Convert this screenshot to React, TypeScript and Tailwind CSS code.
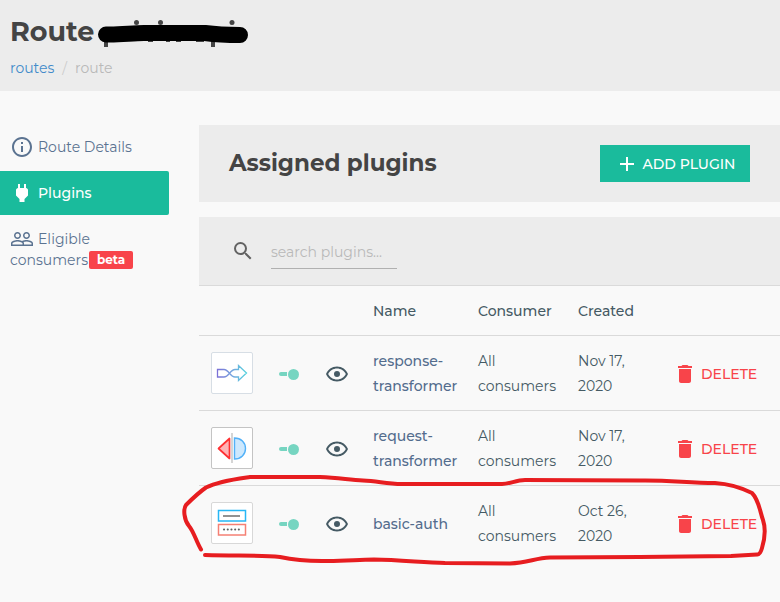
import type { ReactNode } from 'react';
import { MdAdd, MdDelete, MdInfoOutline, MdPeopleOutline, MdSearch } from 'react-icons/md';

function PlugIcon() {
  return (
    <svg viewBox="0 0 24 24" className="size-6 shrink-0" fill="currentColor" aria-hidden="true">
      <path d="M16 7V3h-2v4h-4V3H8v4C7 7 6 8 6 9v5.500L9.500 18v3h5v-3l3.500-3.500V9c0-1-1-2-2-2z" />
    </svg>
  );
}

function EyeIcon() {
  return (
    <svg viewBox="0 0 24 24" className="size-6" fill="currentColor" aria-hidden="true">
      <path d="M12,9A3,3 0 0,1 15,12A3,3 0 0,1 12,15A3,3 0 0,1 9,12A3,3 0 0,1 12,9M12,4.5C17,4.5 21.27,7.61 23,12C21.27,16.39 17,19.5 12,19.5C7,19.5 2.73,16.39 1,12C2.73,7.61 7,4.5 12,4.5M3.18,12C4.83,15.36 8.24,17.5 12,17.5C15.76,17.5 19.17,15.36 20.82,12C19.17,8.64 15.76,6.5 12,6.5C8.24,6.5 4.83,8.64 3.18,12Z" />
    </svg>
  );
}

function ResponseIcon() {
  return (
    <svg viewBox="0 0 40 40" className="size-10" fill="none" aria-hidden="true">
      <defs>
        <linearGradient id="flow" gradientUnits="userSpaceOnUse" x1="5" y1="20" x2="35" y2="20">
          <stop offset="0" stopColor="#7b6fd6" />
          <stop offset="0.5" stopColor="#78a5df" />
          <stop offset="1" stopColor="#52d3dd" />
        </linearGradient>
      </defs>
      <path
        d="M5.500 16.500H12C17 16.500 18 24 23 24H26.500V27.500L34.500 20L26.500 12.500V16.500H23C18 16.500 17 24 12 24H5.500Z"
        stroke="url(#flow)"
        strokeWidth="1.300"
      />
    </svg>
  );
}

function RequestIcon() {
  return (
    <svg viewBox="0 0 40 40" className="size-10" aria-hidden="true">
      <path d="M17.500 10.500V30.500L6.500 20.500Z" fill="#ffb3b5" stroke="#ff3033" strokeWidth="1.700" strokeLinejoin="round" />
      <path d="M20 5V35" stroke="#d5d5d5" strokeWidth="2" />
      <path d="M22.500 10C29 10 33.500 14.500 33.500 20.500C33.500 26.500 29 31 22.500 31Z" fill="#cde8fd" stroke="#52b1f8" strokeWidth="1.400" />
    </svg>
  );
}

function AuthIcon() {
  return (
    <svg viewBox="0 0 40 40" className="size-10" fill="none" aria-hidden="true">
      <rect x="6.500" y="7.500" width="27" height="10.500" stroke="#27b7f5" strokeWidth="1.500" />
      <path d="M11 13H28" stroke="#929292" strokeWidth="2" />
      <rect x="6.500" y="21.500" width="27" height="10.500" stroke="#f58074" strokeWidth="1.500" />
      <path d="M12 26.500H28" stroke="#5f5f5f" strokeWidth="2" strokeLinecap="round" strokeDasharray="0.1 3.6" />
    </svg>
  );
}

type Plugin = { name: string; created: string; icon: ReactNode; frame: string };

const plugins: Plugin[] = [
  { name: 'response-transformer', created: 'Nov 17, 2020', icon: <ResponseIcon />, frame: 'border-[#d7dee5]' },
  { name: 'request-transformer', created: 'Nov 17, 2020', icon: <RequestIcon />, frame: 'border-[#c4c4c4]' },
  { name: 'basic-auth', created: 'Oct 26, 2020', icon: <AuthIcon />, frame: 'border-[#d8d8d8]' },
];

function Toggle({ name }: { name: string }) {
  return (
    <label className="relative flex h-6 w-6 items-center">
      <input type="checkbox" defaultChecked aria-label={`Enable ${name}`} className="absolute inset-0 m-0 size-full cursor-pointer opacity-0" />
      <span className="h-1 w-2 rounded-l-full bg-[#76d5c1]" />
      <span className="ml-px size-[11px] rounded-full bg-[#76d5c1]" />
    </label>
  );
}

function PluginRow({ plugin }: { plugin: Plugin }) {
  return (
    <tr className="h-[75px] border-t border-[#dadada] [&>td]:pt-0.5">
      <td className="pl-3">
        <div className={`-mt-0.5 flex size-[42px] items-center justify-center overflow-hidden rounded-xs border bg-white ${plugin.frame}`}>
          {plugin.icon}
        </div>
      </td>
      <td><Toggle name={plugin.name} /></td>
      <td>
        <button type="button" aria-label={`View ${plugin.name}`} className="block"><EyeIcon /></button>
      </td>
      <td className="pr-4"><a href="#plugin" className="font-medium text-[#536c8d]">{plugin.name}</a></td>
      <td className="pr-4">All consumers</td>
      <td className="pr-10">{plugin.created}</td>
      <td>
        <button type="button" className="flex items-center gap-1 font-medium text-[#f8444a]">
          <MdDelete className="size-6" />
          DELETE
        </button>
      </td>
    </tr>
  );
}

export default function App() {
  return (
    <div className="relative min-h-screen overflow-hidden bg-[#f9f9f9] font-['Montserrat','Inter',sans-serif] text-sm text-[#455a64]">
      <header className="h-[91px] bg-[#ececec] px-2.5 pt-4">
        <h1 className="text-[27px] leading-8 font-bold text-[#444]">Route</h1>
        <nav aria-label="Breadcrumb" className="mt-2.5 flex gap-2 leading-5 text-[#b9b9b9]">
          <a href="#routes" className="text-[#428bca]">routes</a>
          <span className="text-[#ccc]">/</span>
          <span>route</span>
        </nav>
      </header>

      <div className="flex pt-[34px]">
        <aside className="w-[169px] shrink-0 text-[#5b7391]">
          <a href="#details" className="flex h-[46px] items-center gap-1 pb-0.5 pl-2.5">
            <MdInfoOutline className="size-6 shrink-0" />
            Route Details
          </a>
          <a href="#plugins" className="flex h-11 items-center gap-1 rounded-r-xs bg-[#1abb9c] pl-2.5 font-medium text-white">
            <PlugIcon />
            Plugins
          </a>
          <a href="#consumers" className="block pt-[13px] pl-2.5 leading-5">
            <span className="flex h-[22px] items-center gap-1">
              <MdPeopleOutline className="size-6 shrink-0" />
              Eligible
            </span>
            <span className="flex items-center gap-px">
              consumers
              <span className="rounded-xs bg-[#f8444a] px-2 text-xs leading-[18px] font-bold text-white">beta</span>
            </span>
          </a>
        </aside>

        <main className="ml-[30px] min-w-0 flex-1">
          <section className="flex h-[77px] items-center justify-between bg-[#ececec] px-[30px]">
            <h2 className="pb-0.5 text-[23px] leading-8 font-bold text-[#444]">Assigned plugins</h2>
            <button type="button" className="flex h-[37px] w-[150px] items-center justify-center gap-1 bg-[#1abb9c] font-medium text-white">
              <MdAdd className="size-6" />
              ADD PLUGIN
            </button>
          </section>

          <section className="mt-[15px]">
            <div className="flex h-[68px] items-center gap-4 bg-[#ececec] pl-8">
              <label htmlFor="plugin-search" aria-label="Search plugins">
                <MdSearch className="size-6 text-[#626262]" />
              </label>
              <input
                id="plugin-search"
                type="text"
                placeholder="search plugins..."
                className="h-9 w-[126px] border-b border-[#b0b0b0] bg-transparent pt-0.5 text-sm outline-none placeholder:text-[#b9b9b9]"
              />
            </div>
            <table className="w-full table-fixed border-collapse text-left leading-[25px]">
              <colgroup>
                <col className="w-20" />
                <col className="w-[46px]" />
                <col className="w-12" />
                <col className="w-[105px]" />
                <col className="w-[100px]" />
                <col className="w-[95px]" />
                <col />
              </colgroup>
              <thead>
                <tr className="h-[50px] border-t border-[#dadada] [&>th]:pt-0.5 [&>th]:font-medium">
                  <th aria-label="Icon" />
                  <th aria-label="Enabled" />
                  <th aria-label="View" />
                  <th>Name</th>
                  <th>Consumer</th>
                  <th>Created</th>
                  <th aria-label="Actions" />
                </tr>
              </thead>
              <tbody>
                {plugins.map((plugin) => <PluginRow key={plugin.name} plugin={plugin} />)}
              </tbody>
            </table>
          </section>
        </main>
      </div>

      {/* Pen marks over the route name and the basic-auth row */}
      <svg width="780" height="602" viewBox="0 0 780 602" fill="none" className="pointer-events-none absolute top-0 left-0" aria-hidden="true">
        <g fill="#444">
          <circle cx="136.500" cy="22.500" r="2.500" />
          <circle cx="160.500" cy="22.500" r="2.500" />
          <circle cx="232" cy="22.500" r="2.500" />
          <path d="M104 38h4v9h-4zM211 38h4v9h-4zM148 38h5v4h-5zM166 38h4v4h-4zM176 38h5v4h-5zM196 38h8v4h-8z" />
        </g>
        <path d="M106 34.500C120 35 132 33 144 33L205 33Q220 35 240 35" stroke="#000" strokeWidth="16" strokeLinecap="round" strokeLinejoin="round" />
        <path
          d="M201 549.500C196 541 194 532 189 526C184 520 183 509 186 505C194 497 201 491 206 487.500C219 481 236 479 250 477L320 477C340 478 350 480 363 480.500C378 481 386 484 402 484L502 484C510 484 516 480 525 480L640 480.500C670 480 688 483 715 483C730 484 744 489 752 493C759 500 760 512 763 520C766 529 765 538 762 548Q760 555 757 554.500L731 556L640 557L550 557.500C535 558 528 563 510 563.500L445 563C420 562 398 560 374 559.500C354 560 340 561.500 322 561C308 561 294 560 280 557C260 555 238 556 205 555"
          stroke="#e71d20"
          strokeWidth="4"
          strokeLinecap="round"
          strokeLinejoin="round"
        />
      </svg>
    </div>
  );
}
